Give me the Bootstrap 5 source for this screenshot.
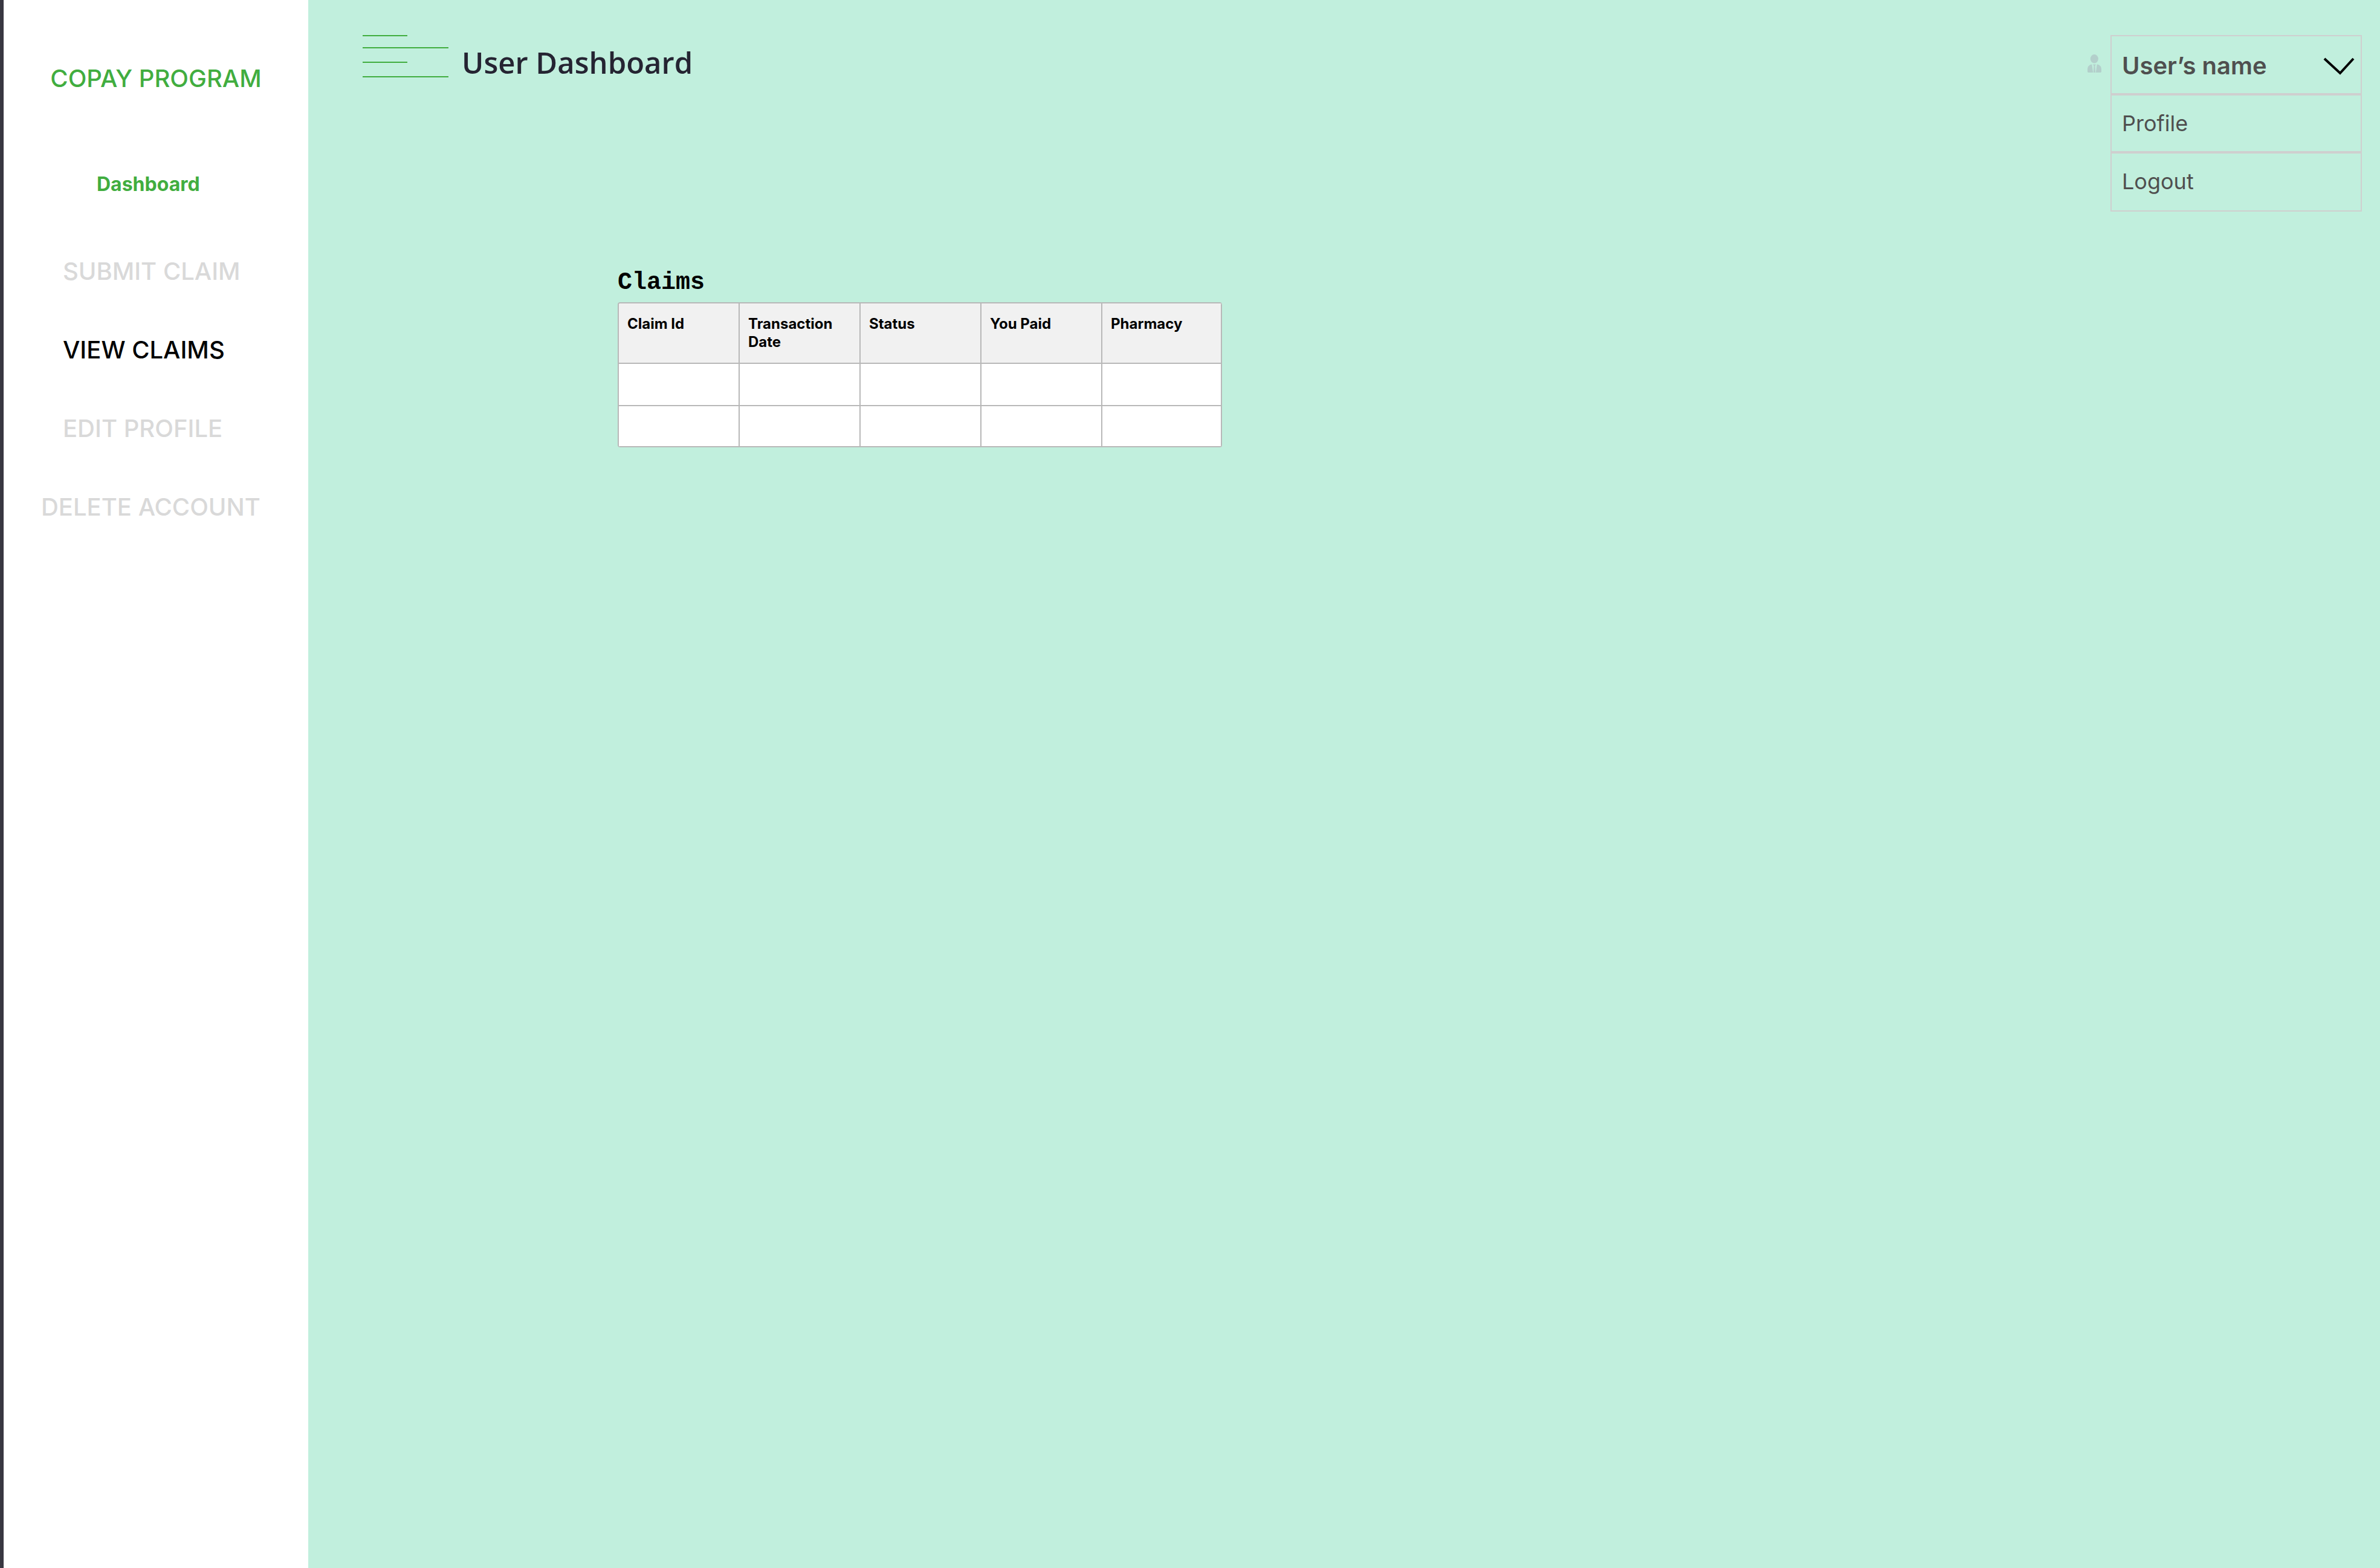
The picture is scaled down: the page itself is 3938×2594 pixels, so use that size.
<!DOCTYPE html>
<html lang="en">
<head>
<meta charset="utf-8">
<meta name="viewport" content="width=device-width, initial-scale=1">
<title>User Dashboard</title>
<link href="https://cdn.jsdelivr.net/npm/bootstrap@5.3.0/dist/css/bootstrap.min.css" rel="stylesheet">
<style>
  body { font-family: Inter, "Liberation Sans", sans-serif; background: #c1efdd; color: #000; }
  .side-panel { width: 510px; border-left: 6px solid #383741; padding-top: 106px; }
  .brand-name { font-size: 40px; line-height: 48px; font-weight: 500; color: #41ad3f; }
  .side-current { font-size: 32px; line-height: 40px; font-weight: 700; color: #41ad3f; margin: 131px 0 100px 154px; }
  .side-links { gap: 82px; padding-left: 98px; }
  .side-links .nav-link { padding: 0; font-size: 40px; line-height: 48px; font-weight: 500; color: #d9d9d9; white-space: nowrap; }
  .side-links .nav-link.active { color: #000; }
  .side-links .outdent { margin-left: -36px; }
  .top-bar { padding: 58px 30px 0 90px; }
  .menu-toggle { color: #41ad3f; line-height: 0; }
  .page-title { font-family: "Open Sans", "Noto Sans", sans-serif; font-size: 49px; line-height: 60px; font-weight: 600; color: #252432; margin: 15px 0 0 22px; }
  .user-icon { margin: 32px 15px 0 0; }
  .user-menu { width: 416px; }
  .user-menu > button, .user-menu .dropdown-item { border: 2px solid #cfcfcf; border-radius: 0; color: #4f4f4f; padding: 0 10px 0 17px; background: transparent; text-align: left; }
  .user-menu > button { height: 98px; padding-top: 3px; font-size: 40px; line-height: 48px; font-weight: 600; }
  .user-menu .dropdown-item { height: 96px; font-size: 36px; line-height: 92px; }
  .user-menu li:last-child .dropdown-item { height: 98px; }
  .claims { width: 1000px; margin: 92px 0 0 512px; }
  .claims-title { font-family: "Liberation Mono", monospace; font-size: 40px; line-height: 52px; font-weight: 700; margin-bottom: 6px; }
  .claims-table { table-layout: fixed; border-collapse: separate; border-spacing: 0; border: solid #b8b8b8; border-width: 2px 0 0 2px; border-radius: 4px; background: #fff; overflow: hidden; }
  .claims-table th, .claims-table td { border: solid #b8b8b8; border-width: 0 2px 2px 0; padding: 19px 14px; vertical-align: top; }
  .claims-table th { width: 200px; height: 100px; background: #f1f1f1; font-size: 24px; line-height: 30px; font-weight: 700; }
  .claims-table th:last-child { width: auto; }
  .claims-table td { height: 70px; }
  .claims-table tr:last-child td { height: 68px; }
</style>
<script src="https://cdn.jsdelivr.net/npm/bootstrap@5.3.0/dist/js/bootstrap.bundle.min.js"></script>
</head>
<body>
<div class="d-flex min-vh-100">
  <aside class="side-panel bg-white flex-shrink-0">
    <div class="brand-name text-center">COPAY PROGRAM</div>
    <p class="side-current">Dashboard</p>
    <nav class="side-links nav flex-column" aria-label="Main">
      <a class="nav-link" href="#">SUBMIT CLAIM</a>
      <a class="nav-link active" aria-current="page" href="#">VIEW CLAIMS</a>
      <a class="nav-link" href="#">EDIT PROFILE</a>
      <a class="nav-link outdent" href="#">DELETE ACCOUNT</a>
    </nav>
  </aside>
  <main class="flex-grow-1">
    <header class="top-bar d-flex justify-content-between align-items-start">
      <div class="d-flex align-items-start">
        <button type="button" class="menu-toggle border-0 bg-transparent p-0" aria-label="Toggle menu">
          <svg width="142" height="70" viewBox="0 0 142 70" fill="currentColor" aria-hidden="true"><path d="M0 0h74v2H0zM0 20h142v2H0zM0 44h74v2H0zM0 68h142v2H0z"/></svg>
        </button>
        <h1 class="page-title">User Dashboard</h1>
      </div>
      <div class="d-flex align-items-start">
        <svg class="user-icon" width="23" height="30" viewBox="0 0 23 30" fill="#b3cfcb" aria-hidden="true"><ellipse cx="11.3" cy="7.3" rx="6.5" ry="7.3"/><path d="M7.300 16.600C2.600 17 0 20.500 0 25v3.200C0 29.300.8 30 1.800 30H9.200z"/><path d="M15.700 16.600C20.400 17 23 20.500 23 25v3.200c0 1.100-.8 1.800-1.800 1.800H13.800z"/><path d="M9.200 16.600h4.600l-1.300 2.700.7 10.700H9.800l.7-10.700z"/></svg>
        <div class="user-menu">
          <button type="button" class="w-100 d-flex align-items-center justify-content-between" aria-expanded="true">
            User’s name
            <svg width="52" height="30" viewBox="0 0 52 30" fill="none" stroke="#000" stroke-width="4" aria-hidden="true"><path d="M2 3l26 24L50 3"/></svg>
          </button>
          <ul class="list-unstyled mb-0">
            <li><a class="dropdown-item" href="#">Profile</a></li>
            <li><a class="dropdown-item" href="#">Logout</a></li>
          </ul>
        </div>
      </div>
    </header>
    <section class="claims">
      <h2 class="claims-title">Claims</h2>
      <table class="claims-table w-100">
        <thead>
          <tr><th scope="col">Claim Id</th><th scope="col">Transaction Date</th><th scope="col">Status</th><th scope="col">You Paid</th><th scope="col">Pharmacy</th></tr>
        </thead>
        <tbody>
          <tr><td></td><td></td><td></td><td></td><td></td></tr>
          <tr><td></td><td></td><td></td><td></td><td></td></tr>
        </tbody>
      </table>
    </section>
  </main>
</div>
</body>
</html>
